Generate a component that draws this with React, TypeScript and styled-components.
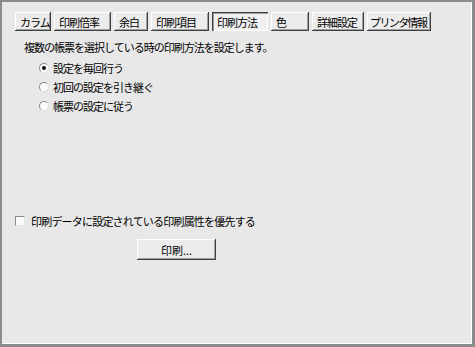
import React from 'react';
import styled, { createGlobalStyle } from 'styled-components';

const GlobalStyle = createGlobalStyle`
  html, body {
    margin: 0;
    padding: 0;
    background: #e8e8e8;
  }
`;

const tabs = [
  { label: 'カラム', width: 36 },
  { label: '印刷倍率', width: 57 },
  { label: '余白', width: 34 },
  { label: '印刷項目', width: 58 },
  { label: '印刷方法', width: 56, active: true },
  { label: '色', width: 38 },
  { label: '詳細設定', width: 52 },
  { label: 'プリンタ情報', width: 64, tight: true },
];

const options = ['設定を毎回行う', '初回の設定を引き継ぐ', '帳票の設定に従う'];

const App: React.FC = () => {
  return (
    <>
      <GlobalStyle />
      <StyledFrame>
        <TabBar>
          {tabs.map((t) => (
            <TabButton
              key={t.label}
              $width={t.width}
              $pressed={!!t.active}
              $tight={!!t.tight}
            >
              {t.label}
            </TabButton>
          ))}
        </TabBar>

        <Description>複数の帳票を選択している時の印刷方法を設定します。</Description>

        <RadioList>
          {options.map((o, i) => (
            <RadioRow key={o}>
              <RadioMark $checked={i === 0} />
              <span>{o}</span>
            </RadioRow>
          ))}
        </RadioList>

        <Spacer />

        <CheckRow>
          <CheckMark />
          <span>印刷データに設定されている印刷属性を優先する</span>
        </CheckRow>

        <PrintButton>印刷...</PrintButton>
      </StyledFrame>
    </>
  );
};

export default App;

const StyledFrame = styled.div`
  box-sizing: border-box;
  width: 475px;
  height: 347px;
  display: flex;
  flex-direction: column;
  background: #e8e8e8;
  border-top: 2px solid #8c8c8c;
  border-left: 2px solid #8c8c8c;
  border-right: 3px solid #8c8c8c;
  border-bottom: 3px solid #8c8c8c;
  box-shadow: inset -1px -1px 0 #ffffff;
  padding: 10px 0 0 13px;
  font-family: 'Noto Sans CJK JP', sans-serif;
  font-size: 11px;
  color: #000;
`;

const TabBar = styled.div`
  display: flex;
  gap: 3px;
`;

const TabButton = styled.div<{ $width: number; $pressed: boolean; $tight: boolean }>`
  box-sizing: border-box;
  width: ${({ $width }) => $width}px;
  height: 19px;
  padding-left: ${({ $tight }) => ($tight ? 3 : 5)}px;
  display: flex;
  align-items: center;
  background: ${({ $pressed }) => ($pressed ? '#f0f0f0' : '#ececec')};
  letter-spacing: ${({ $tight }) => ($tight ? -1.6 : -1)}px;
  white-space: nowrap;
  box-shadow: ${({ $pressed }) =>
    $pressed
      ? 'inset 1px 1px 0 #404040, inset 2px 2px 0 #9a9a9a, inset -1px -1px 0 #ffffff'
      : 'inset -1px -1px 0 #404040, inset 1px 1px 0 #ffffff, inset -2px -2px 0 #a0a0a0'};
`;

const Description = styled.div`
  margin: 9px 0 0 9px;
  letter-spacing: -1px;
  line-height: 14px;
`;

const RadioList = styled.div`
  display: flex;
  flex-direction: column;
  gap: 5px;
  margin: 7px 0 0 24px;
`;

const RadioRow = styled.div`
  display: flex;
  align-items: center;
  gap: 4px;
  height: 14px;
  letter-spacing: -1px;
`;

const RadioMark = styled.div<{ $checked: boolean }>`
  box-sizing: border-box;
  width: 10px;
  height: 10px;
  border-radius: 50%;
  background: #fafafa;
  border: 1px solid;
  border-color: #8a8a8a #e0e0e0 #e0e0e0 #8a8a8a;
  display: flex;
  align-items: center;
  justify-content: center;

  &::after {
    content: '';
    width: 4px;
    height: 4px;
    border-radius: 50%;
    background: ${({ $checked }) => ($checked ? '#111' : 'transparent')};
  }
`;

const Spacer = styled.div`
  flex: 1;
`;

const CheckRow = styled.div`
  display: flex;
  align-items: center;
  gap: 6px;
  height: 14px;
  letter-spacing: -0.8px;
`;

const CheckMark = styled.div`
  box-sizing: border-box;
  width: 10px;
  height: 10px;
  background: #fafafa;
  border: 1px solid;
  border-color: #8a8a8a #e6e6e6 #e6e6e6 #8a8a8a;
`;

const PrintButton = styled.div`
  box-sizing: border-box;
  width: 79px;
  height: 21px;
  margin: 11px 0 84px 122px;
  display: flex;
  align-items: center;
  justify-content: center;
  background: #ececec;
  box-shadow: inset -1px -1px 0 #404040, inset 1px 1px 0 #ffffff,
    inset -2px -2px 0 #a0a0a0;
`;
